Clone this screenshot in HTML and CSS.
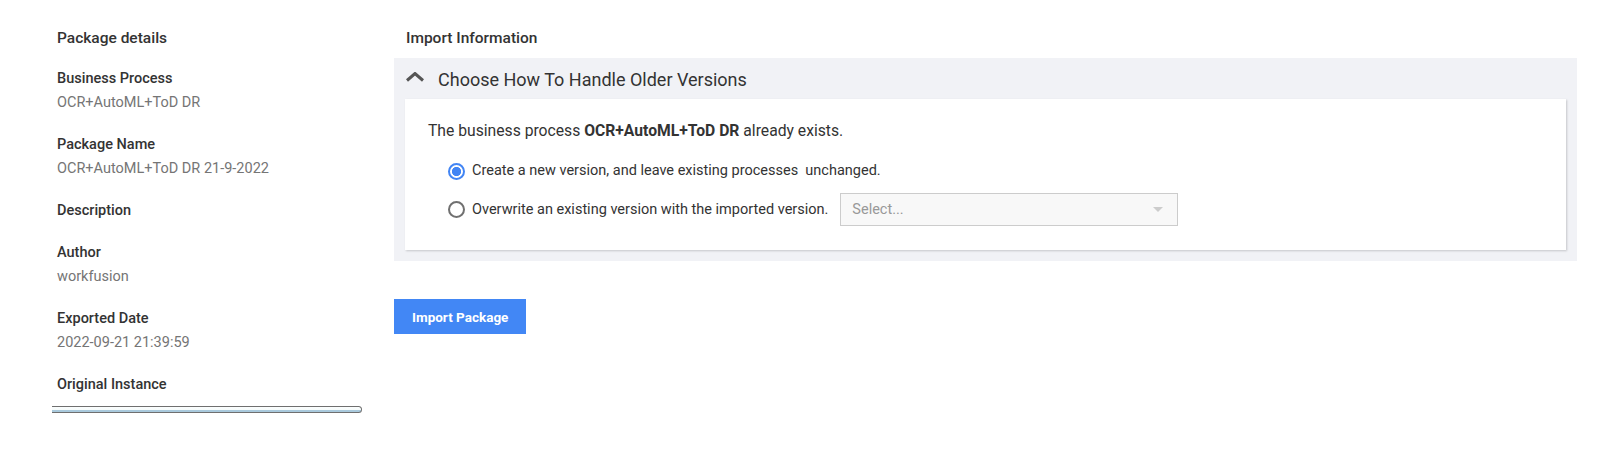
FILE: index.html
```html
<!DOCTYPE html>
<html>
<head>
    <title>Import Package</title>
    <link rel="stylesheet" href="styles.css">
</head>
<body>
    <div class="page">
        <div class="package-details">
            <h2 class="section-title">Package details</h2>
            <div class="detail">
                <div class="detail-label">Business Process</div>
                <div class="detail-value">OCR+AutoML+ToD DR</div>
            </div>
            <div class="detail">
                <div class="detail-label">Package Name</div>
                <div class="detail-value">OCR+AutoML+ToD DR 21-9-2022</div>
            </div>
            <div class="detail">
                <div class="detail-label">Description</div>
            </div>
            <div class="detail">
                <div class="detail-label">Author</div>
                <div class="detail-value">workfusion</div>
            </div>
            <div class="detail">
                <div class="detail-label">Exported Date</div>
                <div class="detail-value">2022-09-21 21:39:59</div>
            </div>
            <div class="detail">
                <div class="detail-label">Original Instance</div>
                <div class="instance-bar"></div>
            </div>
        </div>

        <div class="import-info">
            <h2 class="section-title">Import Information</h2>
            <div class="panel">
                <div class="panel-header">
                    <svg class="chevron" width="20" height="10" viewBox="0 0 20 10">
                        <polyline points="2,8.5 10,1.5 18,8.5" fill="none" stroke="#555" stroke-width="3"/>
                    </svg>
                    <h3 class="panel-title">Choose How To Handle Older Versions</h3>
                </div>
                <div class="card">
                    <p class="message">The business process <b>OCR+AutoML+ToD DR</b> already exists.</p>
                    <div class="options">
                        <label class="option">
                            <input type="radio" name="mode" value="new" checked>
                            <span>Create a new version, and leave existing processes&nbsp; unchanged.</span>
                        </label>
                        <label class="option">
                            <input type="radio" name="mode" value="overwrite">
                            <span>Overwrite an existing version with the imported version.</span>
                            <div class="select">
                                <span class="select-placeholder">Select...</span>
                                <span class="select-arrow"></span>
                            </div>
                        </label>
                    </div>
                </div>
            </div>
            <button type="button" class="import-button">Import Package</button>
        </div>
    </div>
</body>
</html>
```

FILE: styles.css
```css
body {
    margin: 0;
    padding: 0;
    background: white;
    font-family: Roboto, "Liberation Sans", Arial, sans-serif;
    color: #333;
}
.page {
    display: flex;
    padding: 28px 30px 0 0;
}
.package-details {
    width: 337px;
    padding-left: 57px;
}
.section-title {
    margin: 0;
    font-size: 15.5px;
    font-weight: 500;
    line-height: 20px;
    color: #333;
}
.package-details .section-title {
    margin-bottom: 21px;
}
.detail {
    margin-bottom: 22px;
}
.detail-label {
    font-size: 14.5px;
    font-weight: 500;
    line-height: 20px;
    color: #333;
}
.detail-value {
    margin-top: 4px;
    font-size: 14.5px;
    line-height: 20px;
    color: #757575;
}
.instance-bar {
    margin: 11px 0 0 -5px;
    width: 309px;
    height: 5px;
    border-top: 1px solid #6f6f6f;
    border-bottom: 1px solid #6f6f6f;
    border-right: 1px solid #6f6f6f;
    border-radius: 0 4px 4px 0;
    background: linear-gradient(#fbfdfd 0, #f4fbfb 70%, #a9c9dc 70%);
}

.import-info {
    flex: 1;
}
.import-info .section-title {
    padding-left: 12px;
    margin-bottom: 10px;
}
.panel {
    background: #f1f2f6;
    padding: 0 11px 11px;
}
.panel-header {
    height: 41px;
    display: flex;
    align-items: center;
}
.chevron {
    margin-bottom: 4px;
}
.panel-title {
    margin: 3px 0 0 13px;
    font-size: 18px;
    font-weight: 400;
    line-height: 22px;
    color: #333;
}
.card {
    background: white;
    box-shadow: 1px 1px 2px rgba(0,0,0,0.18);
    padding: 22px 23px 24px;
}
.message {
    margin: 0 0 20px;
    font-size: 15.7px;
    line-height: 20px;
    color: #333;
}
.message b {
    font-weight: 700;
}
.options {
    margin-left: 20px;
    display: flex;
    flex-direction: column;
    gap: 12px;
}
.option {
    display: flex;
    align-items: center;
    min-height: 20px;
    font-size: 14.5px;
    line-height: 20px;
    color: #333;
}
.option input {
    appearance: none;
    -webkit-appearance: none;
    margin: 0 7px 0 0;
    width: 17px;
    height: 17px;
    border: 2px solid #707070;
    border-radius: 50%;
    box-sizing: border-box;
    background: white;
}
.option input:checked {
    border-color: #4285f4;
    background: radial-gradient(circle, #4285f4 0 4.3px, white 4.9px);
}
.select {
    margin-left: 12px;
    width: 338px;
    height: 33px;
    box-sizing: border-box;
    border: 1px solid #ccc;
    background: #f8f8f8;
    display: flex;
    align-items: center;
    justify-content: space-between;
    padding: 0 14px 0 11px;
}
.select-placeholder {
    color: #999;
    font-size: 14.5px;
}
.select-arrow {
    width: 0;
    height: 0;
    border-left: 5px solid transparent;
    border-right: 5px solid transparent;
    border-top: 5px solid #ccc;
}
.import-button {
    margin-top: 38px;
    height: 35px;
    padding: 0 18px;
    border: none;
    background: #4287f5;
    color: white;
    font-family: Roboto, "Liberation Sans", Arial, sans-serif;
    font-size: 13.5px;
    font-weight: 700;
    cursor: pointer;
}
```
